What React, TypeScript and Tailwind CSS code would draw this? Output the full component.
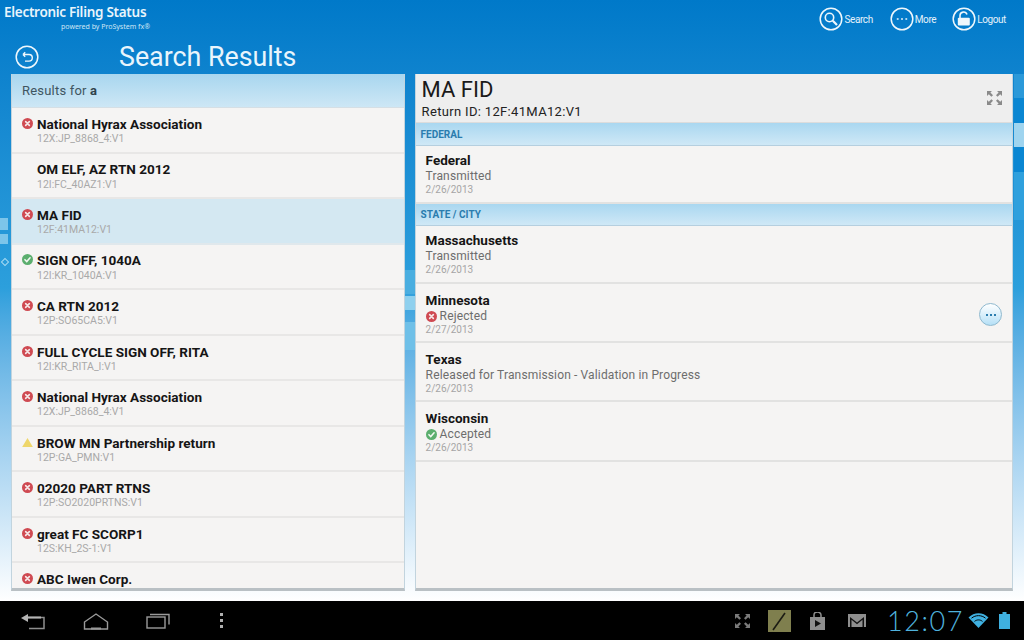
import React from "react";

const font = { fontFamily: "Roboto, 'Liberation Sans', sans-serif" };

function StatusIcon({ kind, size = 11 }: { kind: string; size?: number }) {
  if (kind === "x")
    return (
      <svg width={size} height={size} viewBox="0 0 12 12" className="shrink-0">
        <circle cx="6" cy="6" r="6" fill="#cf4a52" />
        <path d="M4 4l4 4M8 4l-4 4" stroke="#f6e6e6" strokeWidth="1.8" strokeLinecap="round" />
      </svg>
    );
  if (kind === "ok")
    return (
      <svg width={size} height={size} viewBox="0 0 12 12" className="shrink-0">
        <circle cx="6" cy="6" r="6" fill="#5bae6e" />
        <path d="M3.2 6.2l2 2 3.6-4" stroke="#f2f8f2" strokeWidth="1.7" fill="none" strokeLinecap="round" />
      </svg>
    );
  if (kind === "warn")
    return (
      <svg width={size} height={size} viewBox="0 0 12 11" className="shrink-0">
        <path d="M6 .5L11.8 10.5H.2z" fill="#eed66a" />
      </svg>
    );
  return <svg width={size} height={size} className="shrink-0" />;
}

function CircleIcon({ children }: { children: React.ReactNode }) {
  return (
    <svg width="24" height="24" viewBox="0 0 24 24" fill="none" stroke="#eef7fc" strokeWidth="1.5">
      <circle cx="12" cy="12" r="10.8" />
      {children}
    </svg>
  );
}

function Expand({ color }: { color: string }) {
  return (
    <svg width="17" height="16" viewBox="0 0 17 16" fill={color}>
      <path d="M1 1h5L4.4 2.6 7 5.2 5.4 6.8 2.8 4.2 1 6zM16 1h-5l1.6 1.6L10 5.2l1.6 1.6 2.6-2.6L16 6zM1 15h5l-1.6-1.6L7 10.8 5.4 9.2l-2.6 2.6L1 10zM16 15h-5l1.6-1.6-2.6-2.6 1.6-1.6 2.6 2.6L16 10z" />
    </svg>
  );
}

const results = [
  ["x", "National Hyrax Association", "12X:JP_8868_4:V1"],
  ["", "OM ELF, AZ RTN 2012", "12I:FC_40AZ1:V1"],
  ["x", "MA FID", "12F:41MA12:V1"],
  ["ok", "SIGN OFF, 1040A", "12I:KR_1040A:V1"],
  ["x", "CA RTN 2012", "12P:SO65CA5:V1"],
  ["x", "FULL CYCLE SIGN OFF, RITA", "12I:KR_RITA_I:V1"],
  ["x", "National Hyrax Association", "12X:JP_8868_4:V1"],
  ["warn", "BROW MN Partnership return", "12P:GA_PMN:V1"],
  ["x", "02020 PART RTNS", "12P:SO2020PRTNS:V1"],
  ["x", "great FC SCORP1", "12S:KH_2S-1:V1"],
  ["x", "ABC Iwen Corp.", ""],
];

function Section({ label, h }: { label: string; h: string }) {
  return (
    <div className={`${h} shrink-0 flex items-center pl-[5px] text-[10px] font-bold text-[#2a7cae] bg-gradient-to-b from-[#a9d7f0] to-[#cfe8f6] border-b border-[#b5cfdf]`}>
      {label}
    </div>
  );
}

function Filing({ name, status, date, icon, more, h, pt }: { name: string; status: string; date: string; icon?: string; more?: boolean; h: string; pt: string }) {
  return (
    <div className={`${h} ${pt} shrink-0 relative flex flex-col pl-[10px] border-b-2 border-[#e2e2e1]`}>
      <div className="text-[13.5px] leading-[15px] font-bold text-[#151515]">{name}</div>
      <div className="flex items-center gap-[3px] mt-[1px] text-[12px] leading-[15px] text-[#6d6d6d] tracking-[0.14px]">
        {icon && <StatusIcon kind={icon} />}
        {status}
      </div>
      <div className="text-[10px] leading-[13px] text-[#a5a5a5] -mt-[1px]">{date}</div>
      {more && (
        <div className="absolute right-[10px] top-[19px] w-[23px] h-[23px] rounded-full border border-[#8fb9cf] bg-gradient-to-b from-[#ffffff] to-[#b5e0f6] flex items-center justify-center gap-[2px]">
          <span className="w-[2px] h-[2px] bg-[#2a7cae]" />
          <span className="w-[2px] h-[2px] bg-[#2a7cae]" />
          <span className="w-[2px] h-[2px] bg-[#2a7cae]" />
        </div>
      )}
    </div>
  );
}

export default function App() {
  return (
    <div
      style={font}
      className="relative w-[1024px] h-[640px] overflow-hidden flex flex-col bg-gradient-to-b from-[#0079c9] via-[#2c9fdc] via-45% to-[#ffffff] to-94%"
    >
      {/* Decorative background tiles */}
      <div className="absolute left-0 top-[218px] w-[8px] h-[12px] bg-[#7cc5ea]" />
      <div className="absolute left-0 top-[234px] w-[8px] h-[10px] bg-[#7cc5ea]" />
      <div className="absolute left-[2px] top-[259px] w-[6px] h-[6px] rotate-45 border border-[#a5d9f2]" />
      <div className="absolute left-[405px] top-[270px] w-[10px] h-[24px] bg-[#4aaee0]" />
      <div className="absolute left-[405px] top-[296px] w-[10px] h-[14px] bg-[#8fd0ee]" />
      <div className="absolute left-[405px] top-[322px] w-[10px] h-[28px] bg-[#6fc0e8]" />
      <div className="absolute left-[1014px] top-[74px] w-[10px] h-[24px] bg-[#2b99d9]" />
      <div className="absolute left-[1014px] top-[98px] w-[10px] h-[25px] bg-[#0a86d2]" />
      <div className="absolute left-[1014px] top-[123px] w-[10px] h-[24px] bg-[#9fd4ef]" />
      <div className="absolute left-[1014px] top-[147px] w-[10px] h-[25px] bg-[#0a86d2]" />
      <div className="absolute left-[1014px] top-[172px] w-[10px] h-[48px] bg-[#2fa0dd]" />

      {/* Header */}
      <header className="relative h-[74px] shrink-0 flex justify-between">
        <div className="flex flex-col">
          <div className="pl-[4px] pt-[4px] w-[150px]">
            <div className="text-[13.5px] leading-[17px] font-semibold text-[#e8f4fb] whitespace-nowrap" style={{ fontFamily: "'Noto Sans', sans-serif", letterSpacing: "-0.28px" }}>
              Electronic Filing Status
            </div>
            <div className="text-right text-[7px] leading-[9px] mt-[1px] text-[#cfe6f5] whitespace-nowrap" style={{ fontFamily: "'Noto Sans', sans-serif" }}>
              powered by ProSystem fx®
            </div>
          </div>
          <div className="flex items-center mt-[10px] pl-[15px]">
            <CircleIcon>
              <path d="M8 9.5h6a3.3 3.3 0 010 6.6h-4M8 9.5l2.2-2.2M8 9.5l2.2 2.2" strokeWidth="1.4" />
            </CircleIcon>
            <h1 className="ml-[80px] mt-[1px] text-[26.8px] leading-[30px] text-[#e9f5fc] whitespace-nowrap">Search Results</h1>
          </div>
        </div>
        <div className="flex items-start pt-[7px] pr-[18px] text-[10px] text-[#e3f1fa] tracking-[-0.4px]">
          <div className="flex items-center gap-[1px]">
            <CircleIcon>
              <circle cx="10.5" cy="10.5" r="4.2" strokeWidth="1.6" />
              <path d="M13.8 13.8l4.2 4.2" strokeWidth="2.2" />
            </CircleIcon>
            Search
          </div>
          <div className="flex items-center gap-[1px] ml-[17px]">
            <CircleIcon>
              <path d="M6.8 12h1.8M11.1 12h1.8M15.4 12h1.8" strokeWidth="1.6" />
            </CircleIcon>
            More
          </div>
          <div className="flex items-center gap-[1px] ml-[16px]">
            <svg width="24" height="24" viewBox="0 0 24 24" fill="none" stroke="#eef7fc" strokeWidth="1.5">
              <circle cx="12" cy="12" r="10.8" />
              <path d="M8 11V8.5a3.6 3.6 0 017-1" strokeWidth="1.6" />
              <rect x="5.8" y="10.8" width="12" height="7.8" rx="1" fill="#eef7fc" stroke="none" />
            </svg>
            Logout
          </div>
        </div>
      </header>

      {/* Panels */}
      <main className="relative h-[517px] shrink-0 px-[11px] flex gap-[10px]">
        <section className="w-[394px] flex flex-col overflow-hidden bg-[#f5f4f3] border-b-[3px] border-x border-[#b9c0c4] border-x-[#c2d4de]">
          <div className="h-[34px] shrink-0 flex items-center pl-[10px] text-[13px] text-[#3f5560] bg-gradient-to-b from-[#a8d6ef] to-[#cde7f5] border-b border-[#d5dfe5] tracking-[0.2px]">
            Results for&nbsp;<b className="text-[#30424c]">a</b>
          </div>
          <div className="flex-1 overflow-hidden">
            {results.map(([k, name, id], i) => (
              <div
                key={i}
                className={`h-[45.55px] flex gap-[4px] pl-[10px] pt-[8.8px] border-b-2 ${i === 2 ? "bg-[#d4e8f2] border-[#e0e8ec]" : "border-[#e8e7e6]"}`}
              >
                <div className="pt-[1px]"><StatusIcon kind={k} /></div>
                <div>
                  <div className="text-[13.55px] leading-[15px] font-bold text-[#151515] whitespace-nowrap">{name}</div>
                  <div className="text-[10.5px] leading-[13px] mt-[0.2px] text-[#a9a9a9]">{id}</div>
                </div>
              </div>
            ))}
          </div>
        </section>

        <section className="w-[599px] flex flex-col overflow-hidden bg-[#f5f4f3] border-b-[3px] border-x border-[#b9c0c4] border-x-[#c2d4de]">
          <div className="h-[49px] shrink-0 flex justify-between bg-[#eeeeee] border-b border-[#dcdcdc] pl-[6px] pr-[9px]">
            <div>
              <div className="text-[22px] leading-[26px] mt-[3px] text-[#1a1a1a]">MA FID</div>
              <div className="text-[13px] leading-[16px] mt-[1px] text-[#222] tracking-[0.33px]">Return ID: 12F:41MA12:V1</div>
            </div>
            <div className="pt-[16px]"><Expand color="#8a8a8a" /></div>
          </div>
          <Section h="h-[23px]" label="FEDERAL" />
          <Filing h="h-[58px]" pt="pt-[7px]" name="Federal" status="Transmitted" date="2/26/2013" />
          <Section h="h-[22px]" label="STATE / CITY" />
          <Filing h="h-[58px]" pt="pt-[7px]" name="Massachusetts" status="Transmitted" date="2/26/2013" />
          <Filing h="h-[59px]" pt="pt-[9px]" name="Minnesota" status="Rejected" icon="x" date="2/27/2013" more />
          <Filing h="h-[59px]" pt="pt-[9px]" name="Texas" status="Released for Transmission - Validation in Progress" date="2/26/2013" />
          <Filing h="h-[60px]" pt="pt-[9px]" name="Wisconsin" status="Accepted" icon="ok" date="2/26/2013" />
        </section>
      </main>

      {/* System bar */}
      <footer className="relative mt-[10px] h-[39px] shrink-0 bg-black flex items-center text-[#9c9c9c]">
        <div className="flex items-center pl-[20px]">
          <svg width="26" height="18" viewBox="0 0 26 18" fill="none" stroke="#8e8e8e">
            <path d="M8 5.5h16v11H9" strokeWidth="1.5" fill="none" />
            <path d="M1 6l7-4v8z" fill="#b4b4b4" stroke="none" />
            <path d="M8 5.5h13" strokeWidth="2" stroke="#b4b4b4" />
          </svg>
          <svg width="26" height="18" viewBox="0 0 26 18" fill="none" stroke="#9a9a9a" strokeWidth="1.4" className="ml-[37px]">
            <path d="M1.5 10L13 2l11.5 8v7h-23z" />
            <path d="M8 16.5h10" strokeWidth="2" />
          </svg>
          <svg width="24" height="16" viewBox="0 0 24 16" fill="none" stroke="#9a9a9a" strokeWidth="1.4" className="ml-[37px]">
            <rect x="1" y="4" width="18" height="11" />
            <path d="M4 1.5h19v10" />
          </svg>
          <div className="ml-[50px] flex flex-col gap-[3px]">
            <span className="w-[3px] h-[3px] bg-[#b0b0b0]" />
            <span className="w-[3px] h-[3px] bg-[#b0b0b0]" />
            <span className="w-[3px] h-[3px] bg-[#b0b0b0]" />
          </div>
        </div>
        <div className="ml-auto flex items-center pr-[14px]">
          <Expand color="#7a7a7a" />
          <svg width="23" height="22" viewBox="0 0 23 22" className="ml-[17px]">
            <rect width="23" height="22" fill="#7f7f4e" />
            <path d="M5 20L17 3" stroke="#1c1c14" strokeWidth="1.6" />
          </svg>
          <svg width="17" height="18" viewBox="0 0 17 18" className="ml-[18px]">
            <path d="M1 5h15v13H1z" fill="#8e8e8e" />
            <path d="M5 5V3a3.5 3 0 017 0v2" fill="none" stroke="#8e8e8e" strokeWidth="1.5" />
            <path d="M6 8l6 3.5L6 15z" fill="#111" />
          </svg>
          <svg width="18" height="13" viewBox="0 0 18 13" className="ml-[22px]">
            <path d="M0 0h18v13H0z" fill="#8e8e8e" />
            <path d="M2 13V3l7 5.5L16 3v10h-1.5V5.8L9 10.2 3.5 5.8V13z" fill="#111" />
          </svg>
          <div className="ml-[21px] w-[81px] text-[27px] leading-[30px] text-[#4fb2dd] whitespace-nowrap tracking-[1.6px]" style={{ fontFamily: "Lato, Roboto, sans-serif", fontWeight: 300 }}>
            12:07
          </div>
          <svg width="21" height="15" viewBox="0 0 20 15" fill="#3fb0e0">
            <path d="M10 15L0 4.5C5.5-1.2 14.5-1.2 20 4.5z" />
            <path d="M3 5.2c4-3.4 10-3.4 14 0" stroke="#000" strokeWidth="1" fill="none" />
            <path d="M6 8.4c2.4-2 5.6-2 8 0" stroke="#000" strokeWidth="1" fill="none" />
          </svg>
          <svg width="11" height="17" viewBox="0 0 11 17" className="ml-[10px]">
            <path d="M3.5 0h4v2h3.5v15H0V2h3.5z" fill="#3fb0e0" />
          </svg>
        </div>
      </footer>
    </div>
  );
}
